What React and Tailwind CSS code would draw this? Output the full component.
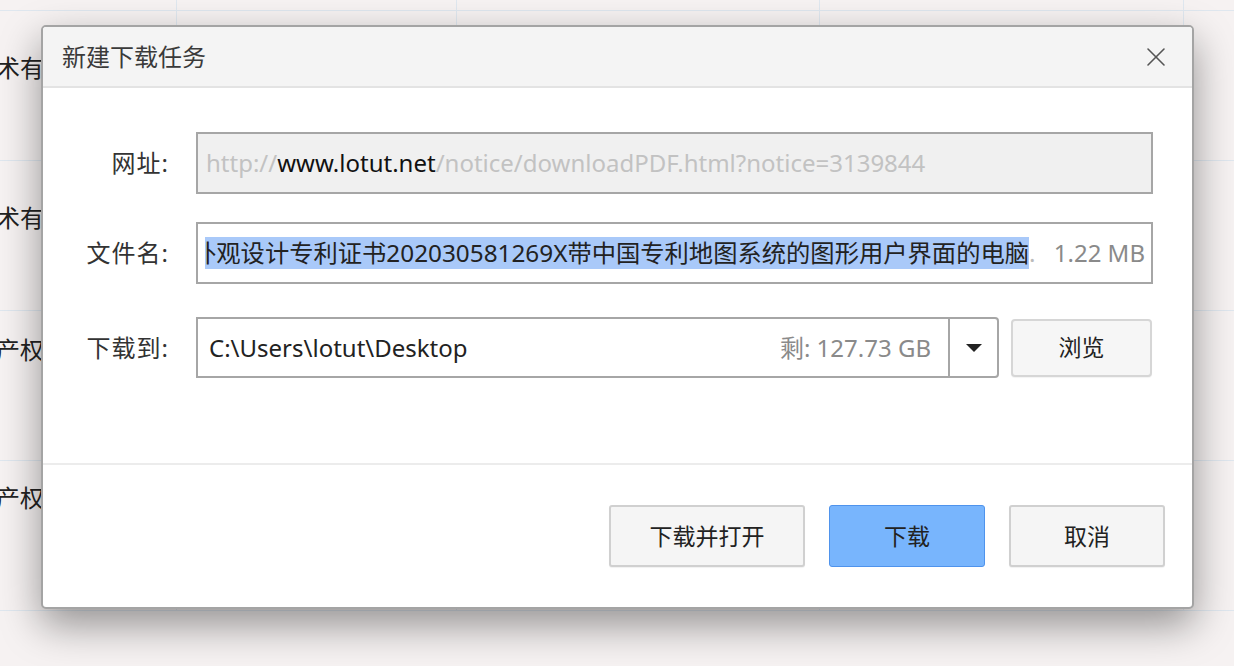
import React from 'react';
import { X } from 'lucide-react';

const font = "font-['Noto_Sans','Noto_Sans_CJK_SC',sans-serif]";

const BgRow = ({ text, top }) => (
  <div className="h-[150px] border-b border-[#dfe7ef] grid grid-cols-[177px_280px_363px_364px_1fr]">
    <div className={`border-r border-[#dfe7ef] text-[24px] leading-[34px] text-[#222] -ml-[4px] ${top}`}>{text}</div>
    <div className="border-r border-[#dfe7ef]" />
    <div className="border-r border-[#dfe7ef]" />
    <div className="border-r border-[#dfe7ef]" />
    <div />
  </div>
);

const Field = ({ label, children, className = '' }) => (
  <div className={`flex items-center ${className}`}>
    <div className="w-[153px] text-right text-[24px] text-[#333] pr-[27px] shrink-0 tracking-[1px]">{label}</div>
    {children}
  </div>
);

const Btn = ({ children, primary, wide }) => (
  <button
    type="button"
    className={`${wide ? 'w-[196px]' : 'w-[156px]'} h-[62px] rounded-[3px] text-[23px] text-[#222] ${
      primary
        ? 'border border-[#4f93ec] bg-[#78b5fd]'
        : 'border-2 border-[#d0d0d0] bg-[#f5f5f5] shadow-[0_1px_1px_rgba(0,0,0,0.06)]'
    }`}
  >
    {children}
  </button>
);

export default function App() {
  return (
    <div className={`relative w-[1234px] h-[666px] overflow-hidden bg-[#f6f2f2] ${font}`}>
      {/* table behind the dialog */}
      <div className="h-[11px] border-b border-[#dfe7ef] grid grid-cols-[177px_280px_363px_364px_1fr]">
        <div className="border-r border-[#dfe7ef]" />
        <div className="border-r border-[#dfe7ef]" />
        <div className="border-r border-[#dfe7ef]" />
        <div className="border-r border-[#dfe7ef]" />
        <div />
      </div>
      <BgRow text="术有" top="pt-[40px]" />
      <BgRow text="术有" top="pt-[40px]" />
      <BgRow text="产权" top="pt-[22px]" />
      <BgRow text="产权" top="pt-[20px]" />

      {/* dialog */}
      <div className="absolute left-[41px] top-[25px] w-[1153px] h-[584px] bg-white border-2 border-[#a4a4a4] rounded-[5px] shadow-[0_16px_40px_rgba(0,0,0,0.4)] flex flex-col overflow-hidden">
        <div className="h-[61px] bg-[#f4f4f4] border-b-2 border-[#e3e3e3] flex items-center justify-between pl-[19px] pr-[20px] shrink-0">
          <span className="text-[24px] text-[#3a3a3a]">新建下载任务</span>
          <X className="w-[32px] h-[32px] text-[#555]" strokeWidth={1.2} />
        </div>

        <div className="flex flex-col pt-[44px] h-[377px] border-b-2 border-[#ececec] shrink-0">
          <Field label="网址:">
            <div className="w-[957px] h-[62px] border-2 border-[#a6a6a6] bg-[#f0f0f0] flex items-center pl-[8px] text-[24px] text-[#c2c2c2] whitespace-nowrap overflow-hidden">
              <span>http://</span>
              <span className="text-[#111]">www.lotut.net</span>
              <span>/notice/downloadPDF.html?notice=3139844</span>
            </div>
          </Field>
          <Field label="文件名:" className="mt-[28px]">
            <div className="w-[957px] h-[62px] border-2 border-[#a6a6a6] bg-white flex items-center text-[24px] whitespace-nowrap overflow-hidden">
              <div className="w-[834px] ml-[7px] overflow-hidden shrink-0 text-[24.3px]">
                <span className="inline-block -ml-[13px] bg-[#a9c9f9] text-[#222] leading-[32px]">
                  外观设计专利证书202030581269X带中国专利地图系统的图形用户界面的电脑
                </span>
                <span className="text-[#bbb]">.</span>
              </div>
              <span className="ml-auto pr-[6px] text-[#8a8a8a]">1.22 MB</span>
            </div>
          </Field>
          <Field label="下载到:" className="mt-[33px]">
            <div className="flex items-center gap-[12px]">
              <div className="w-[803px] h-[61px] border-2 border-[#a6a6a6] bg-white flex rounded-r-[4px]">
                <div className="flex-1 flex items-center justify-between pl-[11px] pr-[17px] text-[24px] border-r-2 border-[#a6a6a6]">
                  <span className="text-[#222]">C:\Users\lotut\Desktop</span>
                  <span className="text-[#8a8a8a]">剩: 127.73 GB</span>
                </div>
                <div className="w-[47px] flex items-center justify-center">
                  <svg width="16" height="8" viewBox="0 0 16 8">
                    <path d="M0 0 L16 0 L8 8 Z" fill="#222" />
                  </svg>
                </div>
              </div>
              <button type="button" className="w-[141px] h-[58px] rounded-[4px] border-2 border-[#d6d6d6] bg-[#f6f6f6] text-[23px] text-[#222] shadow-[0_1px_1px_rgba(0,0,0,0.05)]">
                浏览
              </button>
            </div>
          </Field>
        </div>

        <div className="flex justify-end gap-[24px] pt-[40px] pr-[27px]">
          <Btn wide>下载并打开</Btn>
          <Btn primary>下载</Btn>
          <Btn>取消</Btn>
        </div>
      </div>
    </div>
  );
}
